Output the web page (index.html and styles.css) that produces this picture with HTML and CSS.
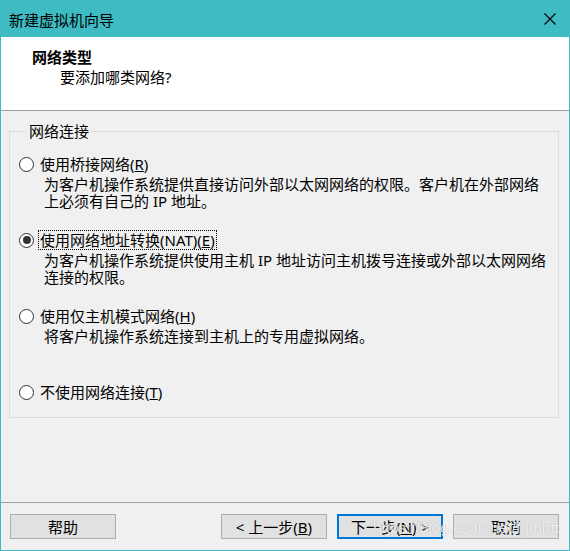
FILE: index.html
```html
<!DOCTYPE html>
<html lang="zh-CN">
<head>
    <meta charset="UTF-8">
    <title>新建虚拟机向导</title>
    <link rel="stylesheet" href="styles.css">
</head>
<body>
    <div class="window">
        <div class="titlebar">
            <span class="title">新建虚拟机向导</span>
            <svg class="close" width="12" height="12" viewBox="0 0 12 12">
                <path d="M0.5 0.5 L11.5 11.5 M11.5 0.5 L0.5 11.5" stroke="#000" stroke-width="1.1" fill="none"/>
            </svg>
        </div>

        <div class="header">
            <div class="header-title">网络类型</div>
            <div class="header-sub">要添加哪类网络?</div>
        </div>

        <div class="main">
            <fieldset class="group">
                <legend>网络连接</legend>

                <div class="option">
                    <div class="option-row">
                        <span class="radio"></span>
                        <span class="label">使用桥接网络(<u>R</u>)</span>
                    </div>
                    <div class="desc">为客户机操作系统提供直接访问外部以太网网络的权限。客户机在外部网络<br>上必须有自己的 IP 地址。</div>
                </div>

                <div class="option">
                    <div class="option-row">
                        <span class="radio checked"></span>
                        <span class="label focused">使用网络地址转换(NAT)(<u>E</u>)</span>
                    </div>
                    <div class="desc">为客户机操作系统提供使用主机 IP 地址访问主机拨号连接或外部以太网网络<br>连接的权限。</div>
                </div>

                <div class="option">
                    <div class="option-row">
                        <span class="radio"></span>
                        <span class="label">使用仅主机模式网络(<u>H</u>)</span>
                    </div>
                    <div class="desc">将客户机操作系统连接到主机上的专用虚拟网络。</div>
                </div>

                <div class="option last">
                    <div class="option-row">
                        <span class="radio"></span>
                        <span class="label">不使用网络连接(<u>T</u>)</span>
                    </div>
                </div>
            </fieldset>
        </div>

        <div class="footer">
            <button class="btn">帮助</button>
            <button class="btn push">&lt; 上一步(<u>B</u>)</button>
            <button class="btn primary">下一步(<u>N</u>) &gt;</button>
            <button class="btn">取消</button>
            <span class="watermark">https://blog.csdn.net/fqmhft</span>
        </div>
    </div>
</body>
</html>
```

FILE: styles.css
```css
* {
    margin: 0;
    padding: 0;
    box-sizing: border-box;
}

body {
    font-family: "Noto Sans", "Noto Sans CJK SC", sans-serif;
    font-size: 15px;
    color: #000;
    background: #f0f0f0;
}

.window {
    width: 570px;
    height: 551px;
    display: flex;
    flex-direction: column;
    border: 1px solid #3ebbc3;
    border-top: none;
    background: #f0f0f0;
}

.titlebar {
    height: 37px;
    background: #3ebbc3;
    display: flex;
    align-items: center;
    margin: 0 -1px;
    padding: 0 14px 0 9px;
}

.title {
    line-height: 20px;
    flex: 1;
    padding-top: 2px;
}

.close {
    display: block;
    margin-top: 1px;
}

.header {
    height: 74px;
    background: #fff;
    border-bottom: 1px solid #a0a0a0;
    padding: 10px 0 0 31px;
}

.header-title {
    font-weight: bold;
    line-height: 20px;
}

.header-sub {
    line-height: 20px;
    padding-left: 28px;
}

.main {
    flex: 1;
}

.group {
    margin: 11px 10px 0 8px;
    border: 1px solid #dcdcdc;
    padding: 14px 10px 15px 9px;
}

.group legend {
    margin-left: 8px;
    padding: 0 2px;
    line-height: 18px;
}

.option {
    margin-bottom: 20px;
}

.option.last {
    margin-bottom: 0;
}

.option-row {
    display: flex;
    align-items: center;
    height: 20px;
}

.radio {
    width: 15px;
    height: 15px;
    border: 1px solid #333;
    border-radius: 50%;
    background: #fff;
    margin-right: 4px;
    position: relative;
    flex-shrink: 0;
}

.radio.checked::after {
    content: "";
    position: absolute;
    left: 2.5px;
    top: 2.5px;
    width: 8px;
    height: 8px;
    border-radius: 50%;
    background: #333;
}

.label {
    padding: 0 2px;
    line-height: 20px;
}

.label.focused {
    outline: 1px dotted #000;
    outline-offset: -1px;
}

.desc {
    margin-top: 2px;
    margin-left: 25px;
    line-height: 17px;
    min-height: 34px;
    white-space: nowrap;
}

.footer {
    height: 48px;
    border-top: 1px solid #a0a0a0;
    display: flex;
    align-items: flex-start;
    gap: 10px;
    padding: 11px 10px 0 9px;
    position: relative;
}

.btn {
    width: 106px;
    height: 25px;
    font-family: inherit;
    font-size: 15px;
    line-height: 20px;
    background: #e1e1e1;
    border: 1px solid #adadad;
    color: #000;
}

.btn.push {
    margin-left: auto;
}

.btn.primary {
    border: 2px solid #0078d7;
}

.watermark {
    position: absolute;
    left: 372px;
    top: 16px;
    font-family: "Liberation Sans", Arial, sans-serif;
    font-size: 15.5px;
    line-height: 18px;
    color: rgba(255, 255, 255, 0.85);
    text-shadow: 0 0 1px rgba(0, 0, 0, 0.3);
    pointer-events: none;
}
```
